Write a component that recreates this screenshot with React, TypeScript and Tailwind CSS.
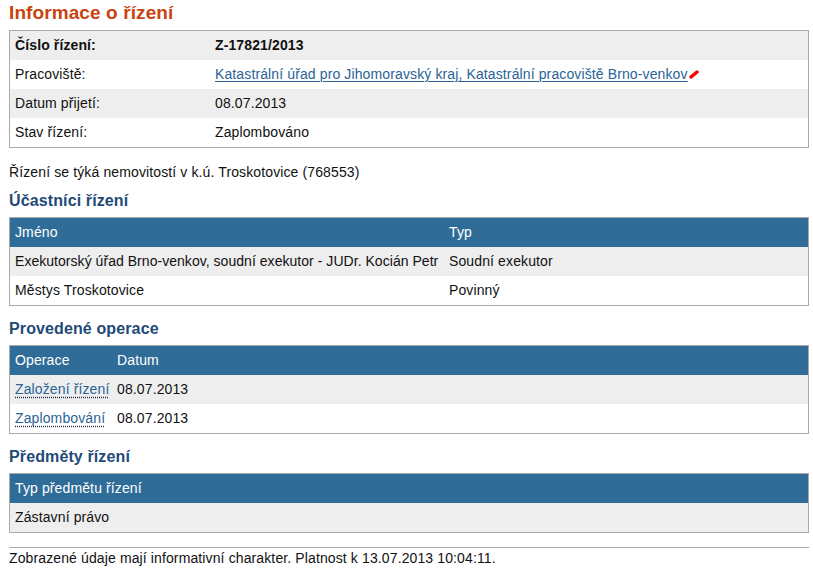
import React from "react";

const Pencil = () => (
  <svg width="10" height="9" viewBox="0 0 10 9" className="inline-block align-baseline ml-[1px]">
    <path d="M2 7 L8 2" stroke="#ff0000" strokeWidth="3.5" strokeLinecap="round" />
  </svg>
);

function Heading({ children, mt }: { children: React.ReactNode; mt: string }) {
  return (
    <h2 className={`text-[16px] leading-[20px] font-bold text-[#1f4a78] mb-[6px] ml-[9px] ${mt}`}>{children}</h2>
  );
}

export default function App() {
  return (
    <div className="w-[813px] h-[577px] bg-white text-[14px] text-[#111] overflow-hidden tracking-[0.12px]" style={{ fontFamily: '"Liberation Sans", Arial, sans-serif' }}>
      <h1 className="text-[19px] leading-[22px] font-bold text-[#c8440f] pt-[2px] ml-[9px] tracking-[0.1px]">Informace o řízení</h1>
      <div className="mt-[6px] ml-[9px] w-[800px] border border-[#aaa]">
        <div className="flex h-[29px] items-center bg-[#eee] font-bold">
          <div className="w-[200px] pl-[5px]">Číslo řízení:</div>
          <div className="pl-[5px]">Z-17821/2013</div>
        </div>
        <div className="flex h-[29px] items-center bg-white">
          <div className="w-[200px] pl-[5px]">Pracoviště:</div>
          <div className="pl-[5px]">
            <a className="text-[#2a6496] underline underline-offset-[2px] decoration-1">
              Katastrální úřad pro Jihomoravský kraj, Katastrální pracoviště Brno-venkov<Pencil />
            </a>
          </div>
        </div>
        <div className="flex h-[29px] items-center bg-[#eee]">
          <div className="w-[200px] pl-[5px]">Datum přijetí:</div>
          <div className="pl-[5px]">08.07.2013</div>
        </div>
        <div className="flex h-[29px] items-center bg-white">
          <div className="w-[200px] pl-[5px]">Stav řízení:</div>
          <div className="pl-[5px]">Zaplombováno</div>
        </div>
      </div>

      <p className="mt-[16px] ml-[9px] leading-[17px]">Řízení se týká nemovitostí v k.ú. Troskotovice (768553)</p>

      <Heading mt="mt-[10px]">Účastníci řízení</Heading>
      <div className="ml-[9px] w-[800px] border border-[#aaa]">
        <div className="flex h-[29px] items-center bg-[#2f6c98] text-white">
          <div className="w-[434px] pl-[5px]">Jméno</div>
          <div className="pl-[5px]">Typ</div>
        </div>
        <div className="flex h-[29px] items-center bg-[#eee]">
          <div className="w-[434px] shrink-0 pl-[5px] whitespace-nowrap overflow-hidden tracking-[0.04px]">Exekutorský úřad Brno-venkov, soudní exekutor - JUDr. Kocián Petr</div>
          <div className="pl-[5px]">Soudní exekutor</div>
        </div>
        <div className="flex h-[29px] items-center bg-white">
          <div className="w-[434px] pl-[5px]">Městys Troskotovice</div>
          <div className="pl-[5px]">Povinný</div>
        </div>
      </div>

      <Heading mt="mt-[13px]">Provedené operace</Heading>
      <div className="ml-[9px] w-[800px] border border-[#aaa]">
        <div className="flex h-[29px] items-center bg-[#2f6c98] text-white">
          <div className="w-[102px] pl-[5px]">Operace</div>
          <div className="pl-[5px]">Datum</div>
        </div>
        <div className="flex h-[29px] items-center bg-[#eee]">
          <div className="w-[102px] shrink-0 pl-[5px] whitespace-nowrap">
            <a className="text-[#2a6496] underline decoration-dotted decoration-[#1a2a40] underline-offset-[3px]">Založení řízení</a>
          </div>
          <div className="pl-[5px]">08.07.2013</div>
        </div>
        <div className="flex h-[29px] items-center bg-white">
          <div className="w-[102px] pl-[5px]">
            <a className="text-[#2a6496] underline decoration-dotted decoration-[#1a2a40] underline-offset-[3px]">Zaplombování</a>
          </div>
          <div className="pl-[5px]">08.07.2013</div>
        </div>
      </div>

      <Heading mt="mt-[13px]">Předměty řízení</Heading>
      <div className="ml-[9px] w-[800px] border border-[#aaa]">
        <div className="flex h-[29px] items-center bg-[#2f6c98] text-white">
          <div className="pl-[5px]">Typ předmětu řízení</div>
        </div>
        <div className="flex h-[29px] items-center bg-[#eee]">
          <div className="pl-[5px]">Zástavní právo</div>
        </div>
      </div>

      <div className="mt-[14px] ml-[9px] w-[800px] border-t border-[#aaa]"></div>
      <p className="ml-[9px] pt-[2px] leading-[17px]">Zobrazené údaje mají informativní charakter. Platnost k 13.07.2013 10:04:11.</p>
    </div>
  );
}
